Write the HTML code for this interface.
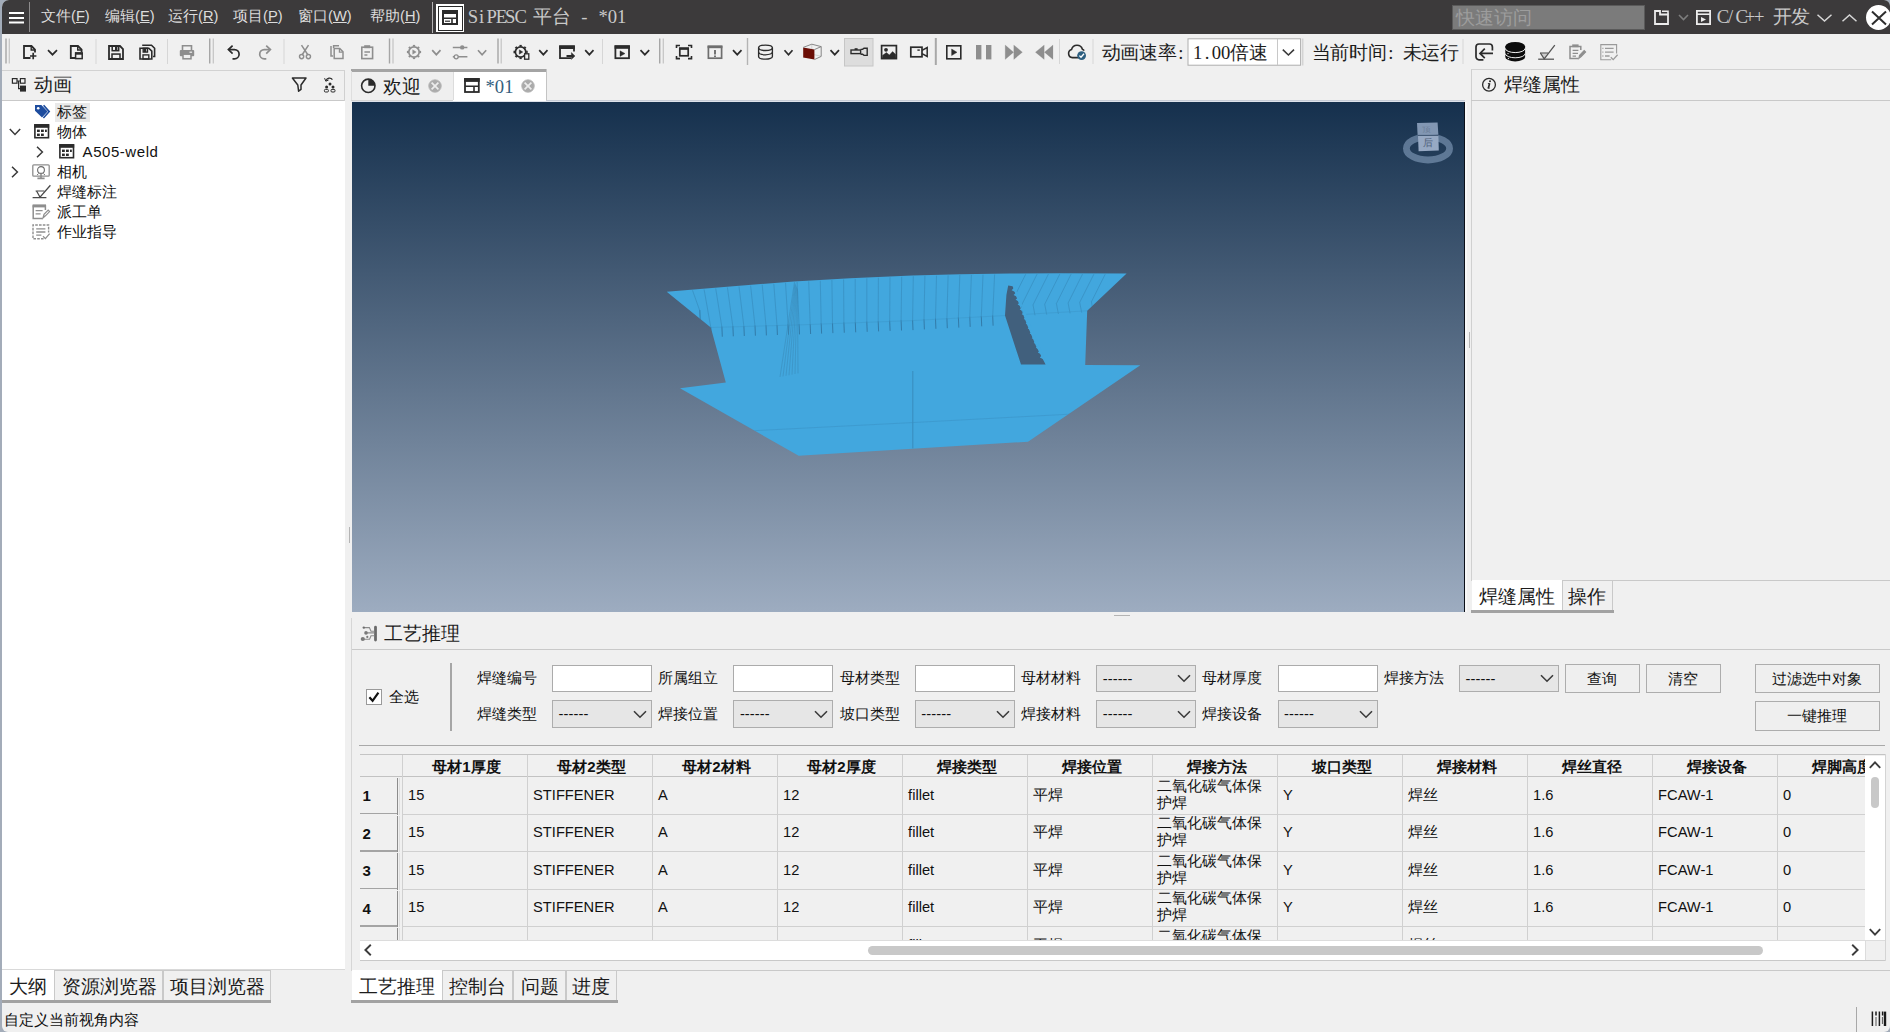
<!DOCTYPE html>
<html lang="zh">
<head>
<meta charset="utf-8">
<title>SiPESC 平台 - *01</title>
<style>
html,body{margin:0;padding:0;}
body{width:1890px;height:1032px;position:relative;overflow:hidden;background:#a3acb9;font-family:"Liberation Sans",sans-serif;color:#1a1a1a;}
.abs{position:absolute;}
#win{position:absolute;left:2px;top:0;width:1888px;height:1032px;background:#f0f0f0;border-radius:7px 6px 6px 6px;overflow:hidden;}
/* everything inside #wrap uses page coordinates */
#wrap{position:absolute;left:-2px;top:0;width:1890px;height:1032px;}
.t{position:absolute;white-space:nowrap;line-height:1;}
.song{font-family:"Liberation Serif",serif;font-weight:300;}
.sans{font-family:"Liberation Sans",sans-serif;}
svg{position:absolute;overflow:visible;}
/* title bar */
#titlebar{left:0;top:0;width:1890px;height:34.4px;background:#3c3a3b;}
.menu{font-size:14.67px;color:#dcdcdc;top:10px;}
/* toolbar */
#toolbar{left:0;top:34px;width:1890px;height:35px;background:#f0f0f0;}
.vsep{position:absolute;width:1px;background:#d4d4d4;top:39px;height:25px;}
.vsepd{position:absolute;width:2px;background:#a8a8a8;top:39px;height:25px;}
.hline{position:absolute;height:1px;background:#c9c9c9;}
.vline{position:absolute;width:1px;background:#c9c9c9;}
</style>
</head>
<body>
<div id="win"><div id="wrap">

<!-- ===== TITLE BAR ===== -->
<div id="titlebar" class="abs"></div>
<!--TITLE-S-->
<svg style="left:9px;top:11px" width="16" height="14" viewBox="0 0 16 14"><path d="M0 2H15M0 7H15M0 11.5H15" stroke="#fff" stroke-width="2.2" fill="none"/></svg>
<div class="abs" style="left:29px;top:2px;width:1px;height:30px;background:#8d8b8c"></div>
<span class="t menu" style="left:41px;top:0;height:34px;line-height:33px">文件(<u>F</u>)</span>
<span class="t menu" style="left:105px;top:0;height:34px;line-height:33px">编辑(<u>E</u>)</span>
<span class="t menu" style="left:168px;top:0;height:34px;line-height:33px">运行(<u>R</u>)</span>
<span class="t menu" style="left:233px;top:0;height:34px;line-height:33px">项目(<u>P</u>)</span>
<span class="t menu" style="left:298px;top:0;height:34px;line-height:33px">窗口(<u>W</u>)</span>
<span class="t menu" style="left:370px;top:0;height:34px;line-height:33px">帮助(<u>H</u>)</span>
<div class="abs" style="left:432px;top:2px;width:1px;height:31px;background:#b5b3b4"></div>
<div class="abs" style="left:436px;top:4px;width:28px;height:28px;background:#fff"></div>
<div class="abs" style="left:437.5px;top:5.5px;width:23px;height:23px;border:1px solid #2a2a2a"></div>
<svg style="left:442px;top:10px" width="16" height="15" viewBox="0 0 16 15"><rect x="1" y="1" width="14" height="13" fill="#fff" stroke="#2b2b2b" stroke-width="2"/><rect x="0" y="0" width="16" height="4" fill="#2b2b2b"/><path d="M1 8.2H15M10 8.2V14" stroke="#2b2b2b" stroke-width="1.6" fill="none"/><path d="M3 11.2H8" stroke="#2b2b2b" stroke-width="1.2"/></svg>
<span class="t song" style="left:467.7px;top:0px;width:9.34px;height:34px;line-height:34px;text-align:center;font-size:18.67px;color:#c9c9c9">S</span><span class="t song" style="left:477.0px;top:0px;width:9.34px;height:34px;line-height:34px;text-align:center;font-size:18.67px;color:#c9c9c9">i</span><span class="t song" style="left:486.4px;top:0px;width:9.34px;height:34px;line-height:34px;text-align:center;font-size:18.67px;color:#c9c9c9">P</span><span class="t song" style="left:495.7px;top:0px;width:9.34px;height:34px;line-height:34px;text-align:center;font-size:18.67px;color:#c9c9c9">E</span><span class="t song" style="left:505.0px;top:0px;width:9.34px;height:34px;line-height:34px;text-align:center;font-size:18.67px;color:#c9c9c9">S</span><span class="t song" style="left:514.4px;top:0px;width:9.34px;height:34px;line-height:34px;text-align:center;font-size:18.67px;color:#c9c9c9">C</span><span class="t song" style="left:533.0px;top:0px;width:18.67px;height:34px;line-height:34px;text-align:center;font-size:18.67px;color:#c9c9c9">平</span><span class="t song" style="left:551.7px;top:0px;width:18.67px;height:34px;line-height:34px;text-align:center;font-size:18.67px;color:#c9c9c9">台</span><span class="t song" style="left:579.7px;top:0px;width:9.34px;height:34px;line-height:34px;text-align:center;font-size:18.67px;color:#c9c9c9">-</span><span class="t song" style="left:598.4px;top:0px;width:9.34px;height:34px;line-height:34px;text-align:center;font-size:18.67px;color:#c9c9c9">*</span><span class="t song" style="left:607.7px;top:0px;width:9.34px;height:34px;line-height:34px;text-align:center;font-size:18.67px;color:#c9c9c9">0</span><span class="t song" style="left:617.1px;top:0px;width:9.34px;height:34px;line-height:34px;text-align:center;font-size:18.67px;color:#c9c9c9">1</span>
<div class="abs" style="left:1452px;top:5px;width:193px;height:25px;background:#7b7b7b;border:1px solid #5a5a5a;box-sizing:border-box"></div>
<span class="t song" style="left:1456px;top:5px;height:25px;line-height:26px;font-size:18.67px;color:#9d9d9d">快速访问</span>
<svg style="left:1654px;top:10px" width="15" height="15" viewBox="0 0 15 15"><path d="M1 1H6V4.5H14V14H1Z" fill="none" stroke="#ececec" stroke-width="1.8"/><path d="M8 1.2H14V4" fill="none" stroke="#ececec" stroke-width="1.6"/></svg>
<svg style="left:1678px;top:14px" width="11" height="7" viewBox="0 0 11 7"><path d="M1 1L5.5 5.5L10 1" fill="none" stroke="#7d7d7d" stroke-width="1.6"/></svg>
<svg style="left:1696px;top:10px" width="15" height="15" viewBox="0 0 15 15"><rect x="0.9" y="0.9" width="13.2" height="13.2" fill="none" stroke="#ececec" stroke-width="1.8"/><path d="M1 4.2H14" stroke="#ececec" stroke-width="1.6"/><path d="M5 7L10 9.5L5 12Z" fill="#ececec"/></svg>
<span class="t song" style="left:1716.7px;top:0px;width:9.34px;height:34px;line-height:34px;text-align:center;font-size:18.67px;color:#c9c9c9">C</span><span class="t song" style="left:1726.0px;top:0px;width:9.34px;height:34px;line-height:34px;text-align:center;font-size:18.67px;color:#c9c9c9">/</span><span class="t song" style="left:1735.4px;top:0px;width:9.34px;height:34px;line-height:34px;text-align:center;font-size:18.67px;color:#c9c9c9">C</span><span class="t song" style="left:1744.7px;top:0px;width:9.34px;height:34px;line-height:34px;text-align:center;font-size:18.67px;color:#c9c9c9">+</span><span class="t song" style="left:1754.0px;top:0px;width:9.34px;height:34px;line-height:34px;text-align:center;font-size:18.67px;color:#c9c9c9">+</span><span class="t song" style="left:1772.7px;top:0px;width:18.67px;height:34px;line-height:34px;text-align:center;font-size:18.67px;color:#c9c9c9">开</span><span class="t song" style="left:1791.4px;top:0px;width:18.67px;height:34px;line-height:34px;text-align:center;font-size:18.67px;color:#c9c9c9">发</span>
<svg style="left:1817px;top:14px" width="15" height="8" viewBox="0 0 15 8"><path d="M0.5 0.8L7.5 7L14.5 0.8" fill="none" stroke="#d6d6d6" stroke-width="1.5"/></svg>
<svg style="left:1842px;top:14px" width="15" height="8" viewBox="0 0 15 8"><path d="M0.5 7.2L7.5 1L14.5 7.2" fill="none" stroke="#d6d6d6" stroke-width="1.5"/></svg>
<div class="abs" style="left:1866.3px;top:5.4px;width:25px;height:25px;border-radius:50%;background:#fff"></div>
<svg style="left:1871px;top:11px" width="16" height="14" viewBox="0 0 16 14"><path d="M1 0.5L15 13.5M15 0.5L1 13.5" stroke="#2e2e2e" stroke-width="2" fill="none"/></svg>
<!--TITLE-E-->

<!-- ===== TOOLBAR ===== -->
<div id="toolbar" class="abs"></div>
<!--TOOLBAR-S-->
<svg style="left:0;top:34px" width="1890" height="36" viewBox="0 34 1890 36"><rect x="5.3" y="38.5" width="1.4" height="25.0" fill="#a6a6a6"/><rect x="8.700000000000001" y="38.5" width="1.2" height="25.0" fill="#c4c4c4"/><path d="M30.5 58H24V46H31.5L35 49.5V52.5" stroke="#2b2b2b" stroke-width="1.8" fill="none" /><path d="M31.2 46.3V50H35" stroke="#2b2b2b" stroke-width="1.4" fill="none" /><path d="M30 56H36.4M33.2 52.8V59.2" stroke="#2b2b2b" stroke-width="1.7" fill="none" /><path d="M48.0 50.199999999999996L52.5 54.699999999999996L57.0 50.199999999999996" stroke="#2b2b2b" stroke-width="1.7" fill="none" /><path d="M75 58H70.8V46H78L81.6 49.6V52" stroke="#2b2b2b" stroke-width="1.8" fill="none" /><path d="M77.7 46.3V50H81.5" stroke="#2b2b2b" stroke-width="1.4" fill="none" /><rect x="75.6" y="53" width="6.6" height="5.6" fill="#f0f0f0" stroke="#2b2b2b" stroke-width="1.5"/><rect x="75" y="52.3" width="7.8" height="2.4" fill="#2b2b2b"/><rect x="95.5" y="39" width="1" height="25" fill="#d6d6d6"/><path d="M109 46H120L123 49V59H109Z" stroke="#2b2b2b" stroke-width="1.8" fill="none" /><rect x="112.2" y="46" width="6.5" height="4.68" fill="none" stroke="#2b2b2b" stroke-width="1.53"/><rect x="115" y="46.8" width="2.4" height="3.6400000000000006" fill="#2b2b2b"/><rect x="112" y="54.06" width="8" height="4.94" fill="none" stroke="#2b2b2b" stroke-width="1.53"/><path d="M143 46V45.2H151.5L154.6 48.3V56.5H153" stroke="#2b2b2b" stroke-width="1.6" fill="none" /><path d="M140 48.2H148.8L151.8 51.2V59.0H140Z" stroke="#2b2b2b" stroke-width="1.6" fill="none" /><rect x="143.2" y="48.2" width="4.300000000000001" height="3.888" fill="none" stroke="#2b2b2b" stroke-width="1.36"/><rect x="143.8" y="49.0" width="2.4" height="3.0240000000000005" fill="#2b2b2b"/><rect x="143" y="54.896" width="5.800000000000001" height="4.104" fill="none" stroke="#2b2b2b" stroke-width="1.36"/><rect x="167.0" y="39" width="1" height="25" fill="#d6d6d6"/><path d="M182.5 50V45.8H191.5V50" stroke="#8e8e8e" stroke-width="1.6" fill="none" /><rect x="179.8" y="50" width="14.4" height="6.2" rx="1" fill="#8e8e8e"/><rect x="183" y="54.2" width="8" height="4.6" fill="#f0f0f0" stroke="#8e8e8e" stroke-width="1.5"/><rect x="189.5" y="51.6" width="2.6" height="1.2" fill="#f0f0f0"/><rect x="209.0" y="38.5" width="1.4" height="25.0" fill="#a6a6a6"/><rect x="212.70000000000002" y="38.5" width="1.2" height="25.0" fill="#c4c4c4"/><path d="M232.6 45.6L228.4 49.6L232.6 53.6" stroke="#2b2b2b" stroke-width="1.7" fill="none" /><path d="M228.8 49.6H234.5A4.6 4.6 0 0 1 234.5 58.8H232.5" stroke="#2b2b2b" stroke-width="1.7" fill="none" /><path d="M266.2 45.6L270.4 49.6L266.2 53.6" stroke="#8e8e8e" stroke-width="1.7" fill="none" /><path d="M270 49.6H264.3A4.6 4.6 0 0 0 264.3 58.8H266.3" stroke="#8e8e8e" stroke-width="1.7" fill="none" /><rect x="283.5" y="39" width="1" height="25" fill="#d6d6d6"/><path d="M301.5 45.2L308 55M308.5 45.2L302 55" stroke="#8e8e8e" stroke-width="1.5" fill="none" /><circle cx="301.6" cy="56.6" r="2.1" fill="none" stroke="#8e8e8e" stroke-width="1.4"/><circle cx="308.4" cy="56.6" r="2.1" fill="none" stroke="#8e8e8e" stroke-width="1.4"/><path d="M333.6 48V45.8H339" stroke="#8e8e8e" stroke-width="1.5" fill="none" /><path d="M331 46V56H333" stroke="#8e8e8e" stroke-width="1.5" fill="none" /><path d="M334.2 48.6H339.8L343 51.8V58.6H334.2Z" stroke="#8e8e8e" stroke-width="1.5" fill="none" /><path d="M339.4 48.8V52.2H342.8" stroke="#8e8e8e" stroke-width="1.2" fill="none" /><rect x="361.8" y="47.2" width="10.8" height="11.4" fill="none" stroke="#8e8e8e" stroke-width="1.6"/><rect x="364.2" y="45.2" width="6" height="3" fill="#8e8e8e"/><path d="M364.4 52H370M364.4 55H367.4" stroke="#8e8e8e" stroke-width="1.3" fill="none" /><rect x="388.8" y="38.5" width="1.4" height="25.0" fill="#a6a6a6"/><rect x="392.4" y="38.5" width="1.2" height="25.0" fill="#c4c4c4"/><circle cx="414" cy="52" r="5.2" fill="none" stroke="#8e8e8e" stroke-width="1.7"/><path d="M419.60 52.00L421.10 52.00" stroke="#8e8e8e" stroke-width="2.3" fill="none" /><path d="M417.96 55.96L419.02 57.02" stroke="#8e8e8e" stroke-width="2.3" fill="none" /><path d="M414.00 57.60L414.00 59.10" stroke="#8e8e8e" stroke-width="2.3" fill="none" /><path d="M410.04 55.96L408.98 57.02" stroke="#8e8e8e" stroke-width="2.3" fill="none" /><path d="M408.40 52.00L406.90 52.00" stroke="#8e8e8e" stroke-width="2.3" fill="none" /><path d="M410.04 48.04L408.98 46.98" stroke="#8e8e8e" stroke-width="2.3" fill="none" /><path d="M414.00 46.40L414.00 44.90" stroke="#8e8e8e" stroke-width="2.3" fill="none" /><path d="M417.96 48.04L419.02 46.98" stroke="#8e8e8e" stroke-width="2.3" fill="none" /><path d="M412.7 49.8L416.2 52L412.7 54.2Z" stroke="#8e8e8e" stroke-width="0.4" fill="#8e8e8e" /><path d="M432.2 50.199999999999996L436.35 54.699999999999996L440.5 50.199999999999996" stroke="#8e8e8e" stroke-width="1.7" fill="none" /><path d="M452.8 47.4H467.4M452.8 56.8H467.4" stroke="#8e8e8e" stroke-width="1.5" fill="none" /><circle cx="462.2" cy="47.4" r="2.2" fill="#8e8e8e"/><circle cx="456.2" cy="56.8" r="2" fill="#f0f0f0" stroke="#8e8e8e" stroke-width="1.3"/><path d="M478.0 50.199999999999996L482.1 54.699999999999996L486.2 50.199999999999996" stroke="#8e8e8e" stroke-width="1.7" fill="none" /><rect x="497.3" y="38.5" width="1.4" height="25.0" fill="#a6a6a6"/><rect x="500.59999999999997" y="38.5" width="1.2" height="25.0" fill="#c4c4c4"/><circle cx="520.6" cy="52" r="5.2" fill="none" stroke="#2b2b2b" stroke-width="1.7"/><path d="M526.20 52.00L527.70 52.00" stroke="#2b2b2b" stroke-width="2.3" fill="none" /><path d="M524.56 55.96L525.62 57.02" stroke="#2b2b2b" stroke-width="2.3" fill="none" /><path d="M520.60 57.60L520.60 59.10" stroke="#2b2b2b" stroke-width="2.3" fill="none" /><path d="M516.64 55.96L515.58 57.02" stroke="#2b2b2b" stroke-width="2.3" fill="none" /><path d="M515.00 52.00L513.50 52.00" stroke="#2b2b2b" stroke-width="2.3" fill="none" /><path d="M516.64 48.04L515.58 46.98" stroke="#2b2b2b" stroke-width="2.3" fill="none" /><path d="M520.60 46.40L520.60 44.90" stroke="#2b2b2b" stroke-width="2.3" fill="none" /><path d="M524.56 48.04L525.62 46.98" stroke="#2b2b2b" stroke-width="2.3" fill="none" /><path d="M519.3000000000001 49.8L522.8000000000001 52L519.3000000000001 54.2Z" stroke="#2b2b2b" stroke-width="0.4" fill="#2b2b2b" /><rect x="524.6" y="53.8" width="4.2" height="5.4" fill="#f0f0f0" stroke="#2b2b2b" stroke-width="1.3"/><path d="M539.2 50.199999999999996L543.35 54.699999999999996L547.5 50.199999999999996" stroke="#2b2b2b" stroke-width="1.7" fill="none" /><path d="M571 58.2H560V46.4H574V51.6" stroke="#2b2b2b" stroke-width="1.8" fill="none" /><rect x="559.2" y="45.4" width="15.6" height="3.6" fill="#2b2b2b"/><path d="M566.5 56H573.2" stroke="#2b2b2b" stroke-width="2" fill="none" /><path d="M571.4 52.6L575 56L571.4 59.4Z" stroke="#2b2b2b" stroke-width="0.4" fill="#2b2b2b" /><path d="M585.2 50.199999999999996L589.35 54.699999999999996L593.5 50.199999999999996" stroke="#2b2b2b" stroke-width="1.7" fill="none" /><rect x="602.0" y="39" width="1" height="25" fill="#d6d6d6"/><rect x="615.4" y="46.2" width="13.6" height="12" fill="none" stroke="#2b2b2b" stroke-width="1.8"/><rect x="614.6" y="45.4" width="15.2" height="3.4" fill="#2b2b2b"/><path d="M620 50.8L625 53.6L620 56.4Z" stroke="#2b2b2b" stroke-width="0.4" fill="#2b2b2b" /><path d="M640.5 50.199999999999996L644.85 54.699999999999996L649.2 50.199999999999996" stroke="#2b2b2b" stroke-width="1.7" fill="none" /><rect x="659.0" y="38.5" width="1.4" height="25.0" fill="#a6a6a6"/><rect x="662.6999999999999" y="38.5" width="1.2" height="25.0" fill="#c4c4c4"/><rect x="679.8" y="48.4" width="8.4" height="7.4" fill="none" stroke="#2b2b2b" stroke-width="1.7"/><rect x="679" y="47.4" width="10" height="2.4" fill="#2b2b2b"/><path d="M676.5 48V45.5H680M688 45.5H691.5V48M691.5 56V58.6H688M680 58.6H676.5V56" stroke="#2b2b2b" stroke-width="1.6" fill="none" /><rect x="708.4" y="46.4" width="13.2" height="11.8" fill="none" stroke="#6e6e6e" stroke-width="1.7"/><rect x="707.6" y="45.6" width="14.8" height="2.6" fill="#6e6e6e"/><path d="M715 50V54.4M715 55.6V57" stroke="#6e6e6e" stroke-width="1.9" fill="none" /><path d="M733.0 50.199999999999996L737.25 54.699999999999996L741.5 50.199999999999996" stroke="#2b2b2b" stroke-width="1.7" fill="none" /><rect x="746.8" y="38" width="1.4" height="27" fill="#b4b4b4"/><ellipse cx="765.5" cy="47.8" rx="6.9" ry="2.7" fill="none" stroke="#2b2b2b" stroke-width="1.35"/><path d="M758.6 47.8V56.4A6.9 2.7 0 0 0 772.4 56.4V47.8" stroke="#2b2b2b" stroke-width="1.35" fill="none" /><path d="M758.6 52.1A6.9 2.7 0 0 0 772.4 52.1" stroke="#2b2b2b" stroke-width="1.2" fill="none" /><path d="M784.5 50.199999999999996L788.5 54.699999999999996L792.5 50.199999999999996" stroke="#2b2b2b" stroke-width="1.7" fill="none" /><path d="M811.8 44.4V54.2L803.4 57.6M811.8 54.2L821 56.2" stroke="#c4c4c4" stroke-width="0.7" fill="none" /><path d="M803.2 47.4L814.4 49.6V59.6L803.2 57.6Z" fill="#6b0e06"/><path d="M803.2 47.4L811.8 44.2L821.2 46.6L814.4 49.6" stroke="#7c7c7c" stroke-width="0.9" fill="none" /><path d="M821.2 46.6V56.4L814.4 59.6" stroke="#7c7c7c" stroke-width="0.9" fill="none" /><path d="M830.5 50.199999999999996L834.75 54.699999999999996L839.0 50.199999999999996" stroke="#2b2b2b" stroke-width="1.7" fill="none" /><rect x="844.5" y="38.5" width="28.5" height="27.5" fill="#dddddd" stroke="#c6c6c6" stroke-width="1"/><rect x="851" y="50" width="9.6" height="3.6" fill="none" stroke="#2b2b2b" stroke-width="1.4"/><path d="M860.6 49.4H862.6L864 48.2H867.2V55.4H864L862.6 54.2H860.6" stroke="#2b2b2b" stroke-width="1.4" fill="none" /><rect x="854.6" y="48.2" width="3" height="1.8" fill="#2b2b2b"/><rect x="881.6" y="45.6" width="14.8" height="13" fill="none" stroke="#2b2b2b" stroke-width="1.7"/><circle cx="886" cy="49.8" r="1.9" fill="#2b2b2b"/><path d="M882.4 58V55.4L886.4 52.6L889.4 55L892.6 51.6L895.8 54.6V58Z" stroke="#2b2b2b" stroke-width="0.4" fill="#2b2b2b" /><rect x="910.8" y="47.2" width="11.2" height="9.6" fill="none" stroke="#2b2b2b" stroke-width="1.7"/><path d="M922 50.4L927.2 47.6V56.4L922 53.6" stroke="#2b2b2b" stroke-width="1.5" fill="none" /><rect x="917.4" y="49.4" width="2.4" height="1.4" fill="#2b2b2b"/><rect x="934.8" y="38" width="2" height="27" fill="#a8a8a8"/><rect x="946.8" y="45.8" width="14" height="13" fill="none" stroke="#2b2b2b" stroke-width="1.6"/><path d="M951.6 49L957 52.3L951.6 55.6Z" stroke="#2b2b2b" stroke-width="0.4" fill="#2b2b2b" /><rect x="976" y="45" width="5.4" height="14.4" fill="#8e8e8e"/><rect x="986" y="45" width="5.4" height="14.4" fill="#8e8e8e"/><path d="M1005.2 45L1013.6 52.2L1005.2 59.4ZM1013.8 45L1022.4 52.2L1013.8 59.4Z" stroke="#8e8e8e" stroke-width="0.2" fill="#8e8e8e" /><path d="M1053 45L1044.4 52.2L1053 59.4ZM1044.2 45L1035.4 52.2L1044.2 59.4Z" stroke="#8e8e8e" stroke-width="0.2" fill="#8e8e8e" /><rect x="1059.0" y="39" width="1" height="25" fill="#d6d6d6"/><path d="M1078.6 57.6H1072.4A4.2 4.2 0 0 1 1071.6 49.4A5.6 5.6 0 0 1 1082.4 49.2A3.6 3.6 0 0 1 1084.2 50.6" stroke="#2b2b2b" stroke-width="1.6" fill="none" /><circle cx="1081.6" cy="55.6" r="4.4" fill="#2d5f80"/><path d="M1079.4 55.6L1081 57.2L1084 53.8" stroke="#fff" stroke-width="1.3" fill="none" /><rect x="1092.5" y="39" width="1" height="25" fill="#d6d6d6"/><rect x="1188" y="38.8" width="112.6" height="26.4" fill="#fff" stroke="#adadad" stroke-width="1"/><rect x="1277" y="39" width="1" height="26" fill="#c8c8c8"/><path d="M1282.8 49.6L1288.4 55L1294 49.6" stroke="#3a3a3a" stroke-width="1.6" fill="none" /><rect x="1302.3" y="38.5" width="1" height="27.0" fill="#c8c8c8"/><rect x="1462.5" y="39" width="1" height="25" fill="#d6d6d6"/><path d="M1483.4 59.8H1479A3 3 0 0 1 1476 56.8V47A3 3 0 0 1 1479 44H1489.4A3 3 0 0 1 1492.4 47V50.6" stroke="#2b2b2b" stroke-width="1.7" fill="none" /><path d="M1493 53.4H1480.6M1484.8 48.6L1480 53.4L1484.8 58.2" stroke="#2b2b2b" stroke-width="1.7" fill="none" /><ellipse cx="1515.2" cy="46.4" rx="9.9" ry="4.5" fill="#0c0c0c"/><path d="M1505.3 46.4V57A9.9 4.4 0 0 0 1525.1 57V46.4Z" fill="#0c0c0c"/><path d="M1505.3 48.4A9.9 4.2 0 0 0 1525.1 48.4M1505.3 53.6A9.9 4.2 0 0 0 1525.1 53.6" stroke="#f0f0f0" stroke-width="1.0" fill="none" /><circle cx="1508" cy="53.6" r="0.7" fill="#f0f0f0"/><circle cx="1508.4" cy="58.6" r="0.7" fill="#f0f0f0"/><path d="M1540.6 53.2H1547.6L1544.2 58.6Z" fill="#cfcfcf"/><path d="M1538.2 59.2H1554" stroke="#555" stroke-width="1.3" fill="none" /><path d="M1540.4 53L1544.2 58.8L1554.8 45.2" stroke="#555" stroke-width="1.3" fill="none" /><path d="M1540 53H1548" stroke="#555" stroke-width="1.1" fill="none" /><path d="M1578.4 58.6H1570V46.4H1580.8V50" stroke="#8e8e8e" stroke-width="1.5" fill="none" /><rect x="1572.2" y="44.4" width="6.4" height="2.8" fill="#8e8e8e"/><path d="M1572.6 50.4H1578.4M1572.6 53.4H1578M1572.6 56.2H1576" stroke="#8e8e8e" stroke-width="1.2" fill="none" /><path d="M1578.8 58.4L1579.6 55.2L1584.2 50.6L1585.6 52L1581.2 56.6Z" stroke="#8e8e8e" stroke-width="1.1" fill="#8e8e8e" /><path d="M1611.2 59.8H1600.8V44.6H1616.6V53.6" stroke="#9a9a9a" stroke-width="1.1" fill="none" /><path d="M1605 48.4H1613.6M1605 52.2H1613.6M1605 56H1609.6" stroke="#9a9a9a" stroke-width="1.3" fill="none" /><path d="M1602.4 48.4H1603.4M1602.4 52.2H1603.4M1602.4 56H1603.4" stroke="#9a9a9a" stroke-width="1.3" fill="none" /><path d="M1610.8 57.2L1613.2 59.6L1617.6 54.8" stroke="#9a9a9a" stroke-width="1.3" fill="none" /></svg>
<span class="t song" style="left:1101.5px;top:38.8px;width:18.67px;height:28px;line-height:28px;text-align:center;font-size:18.67px;color:#1c1c1c">动</span><span class="t song" style="left:1120.2px;top:38.8px;width:18.67px;height:28px;line-height:28px;text-align:center;font-size:18.67px;color:#1c1c1c">画</span><span class="t song" style="left:1138.8px;top:38.8px;width:18.67px;height:28px;line-height:28px;text-align:center;font-size:18.67px;color:#1c1c1c">速</span><span class="t song" style="left:1157.5px;top:38.8px;width:18.67px;height:28px;line-height:28px;text-align:center;font-size:18.67px;color:#1c1c1c">率</span><span class="t song" style="left:1176.2px;top:38.8px;width:9.34px;height:28px;line-height:28px;text-align:center;font-size:18.67px;color:#1c1c1c">:</span>
<span class="t song" style="left:1193.0px;top:38.8px;width:9.34px;height:28px;line-height:28px;text-align:center;font-size:18.67px;color:#1c1c1c">1</span><span class="t song" style="left:1202.3px;top:38.8px;width:9.34px;height:28px;line-height:28px;text-align:center;font-size:18.67px;color:#1c1c1c">.</span><span class="t song" style="left:1211.7px;top:38.8px;width:9.34px;height:28px;line-height:28px;text-align:center;font-size:18.67px;color:#1c1c1c">0</span><span class="t song" style="left:1221.0px;top:38.8px;width:9.34px;height:28px;line-height:28px;text-align:center;font-size:18.67px;color:#1c1c1c">0</span><span class="t song" style="left:1230.3px;top:38.8px;width:18.67px;height:28px;line-height:28px;text-align:center;font-size:18.67px;color:#1c1c1c">倍</span><span class="t song" style="left:1249.0px;top:38.8px;width:18.67px;height:28px;line-height:28px;text-align:center;font-size:18.67px;color:#1c1c1c">速</span>
<span class="t song" style="left:1311.5px;top:38.8px;width:18.67px;height:28px;line-height:28px;text-align:center;font-size:18.67px;color:#1c1c1c">当</span><span class="t song" style="left:1330.2px;top:38.8px;width:18.67px;height:28px;line-height:28px;text-align:center;font-size:18.67px;color:#1c1c1c">前</span><span class="t song" style="left:1348.8px;top:38.8px;width:18.67px;height:28px;line-height:28px;text-align:center;font-size:18.67px;color:#1c1c1c">时</span><span class="t song" style="left:1367.5px;top:38.8px;width:18.67px;height:28px;line-height:28px;text-align:center;font-size:18.67px;color:#1c1c1c">间</span><span class="t song" style="left:1386.2px;top:38.8px;width:9.34px;height:28px;line-height:28px;text-align:center;font-size:18.67px;color:#1c1c1c">:</span>
<span class="t song" style="left:1402.5px;top:38.8px;width:18.67px;height:28px;line-height:28px;text-align:center;font-size:18.67px;color:#1c1c1c">未</span><span class="t song" style="left:1421.2px;top:38.8px;width:18.67px;height:28px;line-height:28px;text-align:center;font-size:18.67px;color:#1c1c1c">运</span><span class="t song" style="left:1439.8px;top:38.8px;width:18.67px;height:28px;line-height:28px;text-align:center;font-size:18.67px;color:#1c1c1c">行</span>
<!--TOOLBAR-E-->

<!-- ===== LEFT PANEL ===== -->
<div class="abs" style="left:2px;top:101px;width:343px;height:868px;background:#fff"></div>
<div class="hline" style="left:2px;top:100px;width:343px;"></div>
<div class="vline" style="left:344px;top:70px;height:31px;background:#d0d0d0"></div>
<!--LEFT-S-->
<div class="hline" style="left:2px;top:70px;width:343px;background:#d2d2d2"></div>
<svg style="left:11px;top:77px" width="16" height="16" viewBox="11 77 16 16"><rect x="12.4" y="78.6" width="4.6" height="4.6" fill="none" stroke="#2b2b2b" stroke-width="1.2"/><rect x="20.4" y="78.6" width="4.6" height="4.6" fill="none" stroke="#2b2b2b" stroke-width="1.2"/><path d="M17 81H20.4M18.6 81V88.6H20" stroke="#2b2b2b" stroke-width="1.2" fill="none"/><rect x="20" y="85.6" width="6" height="6" fill="#2b2b2b"/></svg>
<span class="t song" style="left:33.5px;top:70px;height:30px;line-height:30px;font-size:18.67px;color:#1c1c1c">动画</span>
<svg style="left:290px;top:76px" width="18" height="17" viewBox="290 76 18 17"><path d="M292.4 78H306L301 85V89.4L298.6 91.2L297.8 85Z" fill="none" stroke="#2b2b2b" stroke-width="1.5" stroke-linejoin="round"/></svg>
<svg style="left:322px;top:76px" width="15" height="17" viewBox="322 76 15 17"><path d="M326 80.6A3.6 3.6 0 0 1 332.4 79.6" fill="none" stroke="#2b2b2b" stroke-width="1.2"/><path d="M324.6 78.2L325.8 81.2L328.6 80" fill="none" stroke="#2b2b2b" stroke-width="1"/><circle cx="330" cy="84" r="1.5" fill="#2b2b2b"/><circle cx="326.6" cy="87" r="1.5" fill="#2b2b2b"/><circle cx="333" cy="87" r="1.5" fill="#2b2b2b"/><rect x="324.4" y="89.4" width="4" height="2.6" rx="1" fill="none" stroke="#2b2b2b" stroke-width="1"/><rect x="331" y="89.4" width="4" height="2.6" rx="1" fill="none" stroke="#2b2b2b" stroke-width="1"/></svg>
<div class="abs" style="left:55px;top:102.5px;width:34.5px;height:19px;background:#e9e9e9"></div>
<svg style="left:33.5px;top:104px" width="16" height="16" viewBox="0 0 16 16"><path d="M1 1H7.4L13.6 7.6L8 13.4L1 6.8Z" fill="#1d4c9e"/><circle cx="4.2" cy="4.2" r="1.3" fill="#fff"/><path d="M9.6 1.2L15.2 7.6L9.4 14" fill="none" stroke="#1d4c9e" stroke-width="1.6"/></svg>
<span class="t sans" style="left:57px;top:101.8px;height:20px;line-height:20px;font-size:15px;color:#111;">标签</span>
<svg style="left:9px;top:127.5px" width="12" height="8" viewBox="0 0 12 8"><path d="M0.8 1L6 6.4L11.2 1" fill="none" stroke="#3a3a3a" stroke-width="1.5"/></svg>
<svg style="left:34px;top:124.39999999999999px" width="16" height="15" viewBox="0 0 16 15"><rect x="0.9" y="0.9" width="13.6" height="12.8" fill="#fff" stroke="#2b2b2b" stroke-width="1.6"/><rect x="0.2" y="0.2" width="15" height="3.6" fill="#2b2b2b"/><rect x="3" y="5.6" width="2.8" height="2.4" fill="#2b2b2b"/><rect x="7" y="5.6" width="2.8" height="2.4" fill="#2b2b2b"/><rect x="11" y="5.6" width="1.8" height="2.4" fill="#2b2b2b"/><rect x="3" y="9.6" width="2.8" height="2.4" fill="#2b2b2b"/><rect x="7" y="9.6" width="2.8" height="2.4" fill="#2b2b2b"/></svg>
<span class="t sans" style="left:57px;top:121.80000000000001px;height:20px;line-height:20px;font-size:15px;color:#111;">物体</span>
<svg style="left:36px;top:145.5px" width="8" height="12" viewBox="0 0 8 12"><path d="M1 0.8L6.4 6L1 11.2" fill="none" stroke="#3a3a3a" stroke-width="1.5"/></svg>
<svg style="left:58.8px;top:144.4px" width="16" height="15" viewBox="0 0 16 15"><rect x="0.9" y="0.9" width="13.6" height="12.8" fill="#fff" stroke="#2b2b2b" stroke-width="1.6"/><rect x="0.2" y="0.2" width="15" height="3.6" fill="#2b2b2b"/><rect x="3" y="5.6" width="2.8" height="2.4" fill="#2b2b2b"/><rect x="7" y="5.6" width="2.8" height="2.4" fill="#2b2b2b"/><rect x="11" y="5.6" width="1.8" height="2.4" fill="#2b2b2b"/><rect x="3" y="9.6" width="2.8" height="2.4" fill="#2b2b2b"/><rect x="7" y="9.6" width="2.8" height="2.4" fill="#2b2b2b"/></svg>
<span class="t sans" style="left:82.6px;top:141.8px;height:20px;line-height:20px;font-size:15px;color:#111;letter-spacing:0.55px">A505-weld</span>
<svg style="left:11px;top:165.5px" width="8" height="12" viewBox="0 0 8 12"><path d="M1 0.8L6.4 6L1 11.2" fill="none" stroke="#3a3a3a" stroke-width="1.5"/></svg>
<svg style="left:32px;top:164px" width="18" height="16" viewBox="0 0 18 16"><rect x="0.8" y="0.8" width="16.4" height="11.4" rx="1" fill="none" stroke="#8e8e8e" stroke-width="1.3"/><circle cx="9" cy="6" r="3.4" fill="none" stroke="#6a6a6a" stroke-width="1.1"/><path d="M9 9.4V13.4M5.4 14.4H12.6" stroke="#8e8e8e" stroke-width="1.6" fill="none"/><path d="M6.6 9.6L5 11M11.4 9.6L13 11" stroke="#6a6a6a" stroke-width="0.9"/></svg>
<span class="t sans" style="left:57px;top:161.8px;height:20px;line-height:20px;font-size:15px;color:#111;">相机</span>
<svg style="left:32px;top:184px" width="19" height="15" viewBox="0 0 19 15"><path d="M0.6 13.6H14.4" stroke="#4a4a4a" stroke-width="1.4"/><path d="M4.6 7L8 13.2L18.4 1.2" fill="none" stroke="#4a4a4a" stroke-width="1.3"/><path d="M3.6 7H12.4" stroke="#4a4a4a" stroke-width="1.2"/></svg>
<span class="t sans" style="left:57px;top:181.8px;height:20px;line-height:20px;font-size:15px;color:#111;">焊缝标注</span>
<svg style="left:32px;top:204px" width="18" height="16" viewBox="0 0 18 16"><path d="M10.6 14.6H1.2V2H13.4V6" fill="none" stroke="#8e8e8e" stroke-width="1.5"/><rect x="0.6" y="0.4" width="13.4" height="3" fill="#8e8e8e"/><path d="M3.6 6.6H10.6M3.6 9.8H8.6" stroke="#8e8e8e" stroke-width="1.3"/><path d="M11 14L12 10.4L16.2 6.2L17.6 7.6L13.4 11.8Z" fill="none" stroke="#8e8e8e" stroke-width="1.2"/></svg>
<span class="t sans" style="left:57px;top:201.8px;height:20px;line-height:20px;font-size:15px;color:#111;">派工单</span>
<svg style="left:32px;top:224px" width="18" height="16" viewBox="0 0 18 16"><path d="M11.6 14.8H1V1H16.6V8.6" fill="none" stroke="#8e8e8e" stroke-width="1.4" stroke-dasharray="2.6 1.2"/><path d="M4.2 4.8H13.4M4.2 8H13.4M4.2 11.2H9.4" stroke="#8e8e8e" stroke-width="1.3"/><path d="M11 12.2L13.4 14.6L17.6 9.6" fill="none" stroke="#8e8e8e" stroke-width="1.3"/></svg>
<span class="t sans" style="left:57px;top:221.8px;height:20px;line-height:20px;font-size:15px;color:#111;">作业指导</span>
<div class="hline" style="left:2px;top:969px;width:343px;background:#d9d9d9"></div>
<div class="abs" style="left:2px;top:970px;width:52px;height:30px;background:#fff"></div>
<span class="t song" style="left:8.6px;top:971px;height:30px;line-height:32px;font-size:18.67px;color:#1c1c1c">大纲</span>
<div class="abs" style="left:54px;top:970px;width:108.5px;height:30px;background:#f0f0f0;border:1px solid #c9c9c9;border-bottom:none;box-sizing:border-box"></div>
<span class="t song" style="left:61.5px;top:971px;height:30px;line-height:32px;font-size:18.67px;color:#1c1c1c">资源浏览器</span>
<div class="abs" style="left:162.5px;top:970px;width:108.0px;height:30px;background:#f0f0f0;border:1px solid #c9c9c9;border-bottom:none;box-sizing:border-box"></div>
<span class="t song" style="left:170.3px;top:971px;height:30px;line-height:32px;font-size:18.67px;color:#1c1c1c">项目浏览器</span>
<div class="abs" style="left:2px;top:1000px;width:269px;height:3px;background:#a2a2a2"></div>
<!--LEFT-E-->

<!-- ===== EDITOR TABS + VIEWPORT ===== -->
<div class="abs" style="left:352px;top:102px;width:1112px;height:510px;background:linear-gradient(to bottom,#15304d 0%,#9dacc0 100%)"></div>
<div class="abs" style="left:1464px;top:102px;width:1px;height:510px;background:#0a0f18"></div>
<!--VIEW-S-->
<div class="abs" style="left:351px;top:69px;width:195.4px;height:2.6px;background:#a4a4a4"></div>
<div class="abs" style="left:351px;top:71.6px;width:102px;height:28.4px;background:#efefef"></div>
<div class="abs" style="left:453px;top:71.6px;width:92.8px;height:29.4px;background:#fff"></div>
<div class="vline" style="left:351px;top:71px;height:30px;background:#dedede"></div>
<div class="vline" style="left:452.5px;top:72px;height:28px;background:#dcdcdc"></div>
<div class="vline" style="left:545.8px;top:69px;height:31px;background:#c4c4c4"></div>
<div class="hline" style="left:546px;top:100px;width:919px;background:#c6ccd6"></div>
<div class="hline" style="left:351px;top:100px;width:102px;background:#d4d4d4"></div>
<div class="hline" style="left:352px;top:101px;width:1113px;background:#dde2ea"></div>
<svg style="left:360px;top:78px" width="17" height="17" viewBox="360 78 17 17"><circle cx="368.3" cy="85.8" r="6.7" fill="none" stroke="#2b2b2b" stroke-width="1.6"/><path d="M368.3 85.8V79.2A6.7 6.7 0 0 1 375 85.8Z" fill="#2b2b2b"/></svg>
<span class="t song" style="left:383px;top:71.8px;height:30px;line-height:30px;font-size:18.67px;color:#1c1c1c">欢迎</span>
<svg style="left:428px;top:78.8px" width="14" height="14" viewBox="-7 -7 14 14"><circle cx="0" cy="0" r="6.3" fill="#ababab"/><path d="M-3.4 -3.4L3.4 3.4M3.4 -3.4L-3.4 3.4" stroke="#ececec" stroke-width="1.7"/><circle cx="0" cy="0" r="6.3" fill="none" stroke="#b8b8b8" stroke-width="0.8"/></svg>
<svg style="left:463.5px;top:78px" width="16" height="15" viewBox="0 0 16 15"><rect x="1" y="1" width="13.8" height="13" fill="#fff" stroke="#2b2b2b" stroke-width="1.8"/><rect x="0.1" y="0.1" width="15.6" height="3.8" fill="#2b2b2b"/><path d="M1 8.2H15M10 8.2V14" stroke="#2b2b2b" stroke-width="1.6" fill="none"/></svg>
<span class="t song" style="left:485.5px;top:71.8px;width:9.34px;height:30px;line-height:30px;text-align:center;font-size:18.67px;color:#35607e">*</span><span class="t song" style="left:494.8px;top:71.8px;width:9.34px;height:30px;line-height:30px;text-align:center;font-size:18.67px;color:#35607e">0</span><span class="t song" style="left:504.2px;top:71.8px;width:9.34px;height:30px;line-height:30px;text-align:center;font-size:18.67px;color:#35607e">1</span>
<svg style="left:521.4px;top:78.8px" width="14" height="14" viewBox="-7 -7 14 14"><circle cx="0" cy="0" r="6.3" fill="#ababab"/><path d="M-3.4 -3.4L3.4 3.4M3.4 -3.4L-3.4 3.4" stroke="#ececec" stroke-width="1.7"/><circle cx="0" cy="0" r="6.3" fill="none" stroke="#b8b8b8" stroke-width="0.8"/></svg>
<svg style="left:352px;top:102px" width="1112" height="510" viewBox="352 102 1112 510"><defs><clipPath id="mclip"><polygon points="666.7,291.7 730,286.4 793.7,281.4 850,278.2 912,275.4 960,274.2 1009.6,273.4 1060,273.3 1126.6,273.4 1087.2,310.8 1085.2,365 1140.3,365.3 1028,441.7 798.7,455.8 680,388.3 725.8,382.5 710.8,327.5"/></clipPath></defs><polygon points="666.7,291.7 730,286.4 793.7,281.4 850,278.2 912,275.4 960,274.2 1009.6,273.4 1060,273.3 1126.6,273.4 1087.2,310.8 1085.2,365 1140.3,365.3 1028,441.7 798.7,455.8 680,388.3 725.8,382.5 710.8,327.5" fill="#42a7de"/><g clip-path="url(#mclip)"><path d="M692.5 290.3L699.8 310.8M704.1 289.4L710.8 327.5M715.7 288.4L721.9 327.2M727.4 287.4L732.9 326.8M739.0 286.5L743.9 326.5M750.6 285.6L755.0 326.2M762.2 284.7L766.0 325.9M773.8 283.8L777.0 325.5M785.5 282.8L788.1 325.2M797.1 282.0L799.1 324.9M808.7 281.3L810.2 324.5M820.3 280.7L821.2 324.1M831.9 280.0L832.5 323.6M843.6 279.4L843.9 323.2M855.2 278.8L855.3 322.8M866.8 278.2L866.8 322.3M878.4 277.7L878.2 321.9M890.0 277.2L889.7 321.4M901.7 276.7L901.1 321.0M913.3 276.2L912.6 320.6M924.9 275.9L924.0 319.9M936.5 275.6L935.5 319.3M948.1 275.3L946.9 318.7M959.8 275.0L958.4 318.1M971.4 274.8L969.8 317.4M983.0 274.6L981.3 316.8M994.6 274.4L992.7 316.2M1025.7 274.2L1009.7 306.1L1011.7 316.6M1037.1 274.1L1021.4 305.5L1023.4 316.0M1048.4 274.1L1033.0 304.9L1035.0 315.3M1059.8 274.1L1044.7 304.2L1046.7 314.6M1071.1 274.1L1056.4 303.6L1058.4 314.0M1082.5 274.1L1068.1 303.0L1070.1 313.3M1093.9 274.2L1079.7 302.4L1081.7 312.6M1105.2 274.2L1091.4 301.8L1093.4 312.3" stroke="#3484b5" stroke-width="0.7" fill="none" opacity="0.75"/><path d="M699.8 310.3L700.2 320.3M710.8 327.0L711.2 337.0M721.9 326.7L722.3 336.7M732.9 326.3L733.3 336.3M743.9 326.0L744.3 336.0M755.0 325.7L755.4 335.7M766.0 325.4L766.4 335.4M777.0 325.0L777.4 335.0M788.1 324.7L788.5 334.7M799.1 324.4L799.5 334.4M810.2 324.0L810.6 334.0M821.2 323.6L821.6 333.6M832.5 323.1L832.9 333.1M843.9 322.7L844.3 332.7M855.3 322.3L855.7 332.3M866.8 321.8L867.2 331.8M878.2 321.4L878.6 331.4M889.7 320.9L890.1 330.9M901.1 320.5L901.5 330.5M912.6 320.1L913.0 330.1M924.0 319.4L924.4 329.4M935.5 318.8L935.9 328.8M946.9 318.2L947.3 328.2M958.4 317.6L958.8 327.6M969.8 316.9L970.2 326.9M981.3 316.3L981.7 326.3M992.7 315.7L993.1 325.7" stroke="#2e6d99" stroke-width="0.9" fill="none" opacity="0.85"/><path d="M710.8 327.5L801.7 324.8L912 320.6L1000 315.8L1087.2 310.8" stroke="#3b94c8" stroke-width="0.7" fill="none" opacity="0.7"/><path d="M794.5 282.0L780.0 377.0M795.0 283.2L783.0 376.4M795.5 284.4L786.0 375.8M796.0 285.6L789.0 375.2M796.5 286.8L792.0 374.6M797.0 288.0L795.0 374.0M797.5 289.2L798.0 373.4" stroke="#3a86b4" stroke-width="0.7" fill="none" opacity="0.7"/><polygon points="1008.2,285.6 1012.6,286.2 1019.4,305 1027.6,326 1036,346 1045.6,364.4 1021,364.6 1005,315.6 1006.4,295" fill="#41607d"/><path d="M1015.0 286.8l-3.4 3.4l5.2 2.6zM1017.0 291.6l-3.4 3.4l5.2 2.6zM1019.0 296.4l-3.4 3.4l5.2 2.6zM1021.0 301.2l-3.4 3.4l5.2 2.6zM1023.1 306.0l-3.4 3.4l5.2 2.6zM1025.1 310.8l-3.4 3.4l5.2 2.6zM1027.1 315.6l-3.4 3.4l5.2 2.6zM1029.1 320.4l-3.4 3.4l5.2 2.6zM1031.1 325.2l-3.4 3.4l5.2 2.6zM1033.1 330.0l-3.4 3.4l5.2 2.6zM1035.1 334.8l-3.4 3.4l5.2 2.6zM1037.1 339.6l-3.4 3.4l5.2 2.6zM1039.2 344.4l-3.4 3.4l5.2 2.6zM1041.2 349.2l-3.4 3.4l5.2 2.6zM1043.2 354.0l-3.4 3.4l5.2 2.6z" fill="#42a7de"/><path d="M912.8 371V448.5" stroke="#357fae" stroke-width="0.8" opacity="0.85"/><path d="M748 431L912 422.6L1078.7 413.7" stroke="#3a8fc2" stroke-width="0.7" fill="none" opacity="0.7"/></g><ellipse cx="1428" cy="148.4" rx="21.6" ry="11.6" fill="none" stroke="#8fa9c8" stroke-opacity="0.55" stroke-width="6.8"/><polygon points="1417,123 1437.6,122.4 1438.4,134.8 1417.6,135.2" fill="#8297b3"/><polygon points="1418,135.8 1438.4,135.4 1438.8,150.6 1418.6,151.2" fill="#97a9c3"/><path d="M1417.5 135.4H1438.5" stroke="#3a506c" stroke-width="0.9"/></svg>
<span class="t sans" style="left:1423px;top:138px;font-size:10px;color:#50627c;line-height:10px">后</span>
<span class="t sans" style="left:1422px;top:124.5px;font-size:9px;color:#6b7e98;line-height:9px;transform:scaleY(0.8)">顶</span>
<div class="abs" style="left:1114px;top:615px;width:16px;height:1px;background:#b4b4b4"></div>
<div class="abs" style="left:348.5px;top:527px;width:1px;height:16px;background:#b4b4b4"></div>
<div class="abs" style="left:1468.5px;top:332px;width:1px;height:16px;background:#b4b4b4"></div>
<div class="abs" style="left:1465px;top:102px;width:2px;height:510px;background:#f8f8f8"></div>
<!--VIEW-E-->

<!-- ===== RIGHT PANEL ===== -->
<!--RIGHT-S-->
<div class="hline" style="left:1471px;top:69px;width:419px;background:#d2d2d2"></div>
<div class="vline" style="left:1471px;top:69px;height:512px;background:#d0d0d0"></div>
<div class="hline" style="left:1471px;top:100px;width:419px;background:#c9c9c9"></div>
<svg style="left:1481px;top:77px" width="16" height="16" viewBox="0 0 16 16"><circle cx="8" cy="7.8" r="6.4" fill="none" stroke="#2b2b2b" stroke-width="1.3"/><path d="M8.6 6.4L7.4 11.2" stroke="#2b2b2b" stroke-width="1.7"/><path d="M6.9 6.5H8.7M6.6 11.2H8.6" stroke="#2b2b2b" stroke-width="0.9"/><circle cx="9" cy="4.2" r="1" fill="#2b2b2b"/></svg>
<span class="t song" style="left:1503.5px;top:70px;height:30px;line-height:30px;font-size:18.67px;color:#1c1c1c">焊缝属性</span>
<div class="hline" style="left:1561px;top:580px;width:329px;background:#c9c9c9"></div>
<div class="abs" style="left:1472px;top:580px;width:89.5px;height:30px;background:#fff"></div>
<span class="t song" style="left:1478.6px;top:581px;height:30px;line-height:32px;font-size:18.67px;color:#1c1c1c">焊缝属性</span>
<div class="abs" style="left:1561.5px;top:580px;width:51.0px;height:30px;background:#f0f0f0;border:1px solid #c9c9c9;border-bottom:none;box-sizing:border-box"></div>
<span class="t song" style="left:1568.4px;top:581px;height:30px;line-height:32px;font-size:18.67px;color:#1c1c1c">操作</span>
<div class="abs" style="left:1471px;top:610px;width:142.5px;height:2.6px;background:#a2a2a2"></div>
<!--RIGHT-E-->

<!-- ===== BOTTOM PANEL ===== -->
<!--BOTTOM-S-->
<div class="vline" style="left:351px;top:618px;height:353px;background:#d6d6d6"></div>
<div class="hline" style="left:352px;top:649px;width:1538px;background:#c9c9c9"></div>
<div class="hline" style="left:352px;top:970px;width:1538px;background:#c9c9c9"></div>
<svg style="left:360px;top:624px" width="19" height="19" viewBox="360 624 19 19"><path d="M375.5 627.2V640" stroke="#6a6a6a" stroke-width="2.8" stroke-linecap="round"/><path d="M364 627.6H369.4L371 631.2H374.4M366.2 632.9H374.4M362.8 639.2H369.6L371 635.8H374.4" fill="none" stroke="#8a8a8a" stroke-width="1.1"/><circle cx="363.8" cy="627.6" r="1.2" fill="#6e6e6e"/><circle cx="366" cy="632.9" r="1.8" fill="#7a7a7a"/><circle cx="367.3" cy="636.9" r="1.1" fill="#7a7a7a"/><circle cx="362.8" cy="639" r="2.1" fill="#7a7a7a"/></svg>
<span class="t song" style="left:383.5px;top:618.5px;height:30px;line-height:30px;font-size:18.67px;color:#1c1c1c">工艺推理</span>
<div class="abs" style="left:365.5px;top:688.5px;width:16px;height:16px;background:#fff;border:1px solid #9a9a9a;box-sizing:border-box"></div>
<svg style="left:367.5px;top:690.5px" width="12" height="12" viewBox="0 0 12 12"><path d="M1.4 6.2L4.6 9.8L10.4 1.6" fill="none" stroke="#111" stroke-width="2.2"/></svg>
<span class="t song" style="left:388.5px;top:686.7px;height:20px;line-height:20px;font-size:14.67px;color:#111">全选</span>
<div class="abs" style="left:450px;top:663px;width:1.6px;height:68px;background:#a6a6a6"></div>
<span class="t song" style="left:476.8px;top:668.3px;height:20px;line-height:20px;font-size:14.67px;color:#111">焊缝编号</span>
<div class="abs" style="left:552px;top:664.5px;width:100px;height:27.8px;background:#fff;border:1px solid #ababab;box-sizing:border-box"></div>
<span class="t song" style="left:658.2px;top:668.3px;height:20px;line-height:20px;font-size:14.67px;color:#111">所属组立</span>
<div class="abs" style="left:733.4px;top:664.5px;width:100px;height:27.8px;background:#fff;border:1px solid #ababab;box-sizing:border-box"></div>
<span class="t song" style="left:839.6px;top:668.3px;height:20px;line-height:20px;font-size:14.67px;color:#111">母材类型</span>
<div class="abs" style="left:914.8px;top:664.5px;width:100px;height:27.8px;background:#fff;border:1px solid #ababab;box-sizing:border-box"></div>
<span class="t song" style="left:1021px;top:668.3px;height:20px;line-height:20px;font-size:14.67px;color:#111">母材材料</span>
<div class="abs" style="left:1096.2px;top:664.5px;width:100px;height:27.8px;background:#e6e6e6;border:1px solid #adadad;box-sizing:border-box"></div>
<span class="t sans" style="left:1102.7px;top:664.5px;height:27.8px;line-height:28.8px;font-size:14.67px;color:#111;letter-spacing:0.1px">------</span>
<svg style="left:1177.2px;top:674.4px" width="14" height="9" viewBox="0 0 14 9"><path d="M1 1.2L7 7.2L13 1.2" fill="none" stroke="#3a3a3a" stroke-width="1.6"/></svg>
<span class="t song" style="left:1202.4px;top:668.3px;height:20px;line-height:20px;font-size:14.67px;color:#111">母材厚度</span>
<div class="abs" style="left:1277.6px;top:664.5px;width:100px;height:27.8px;background:#fff;border:1px solid #ababab;box-sizing:border-box"></div>
<span class="t song" style="left:1383.8px;top:668.3px;height:20px;line-height:20px;font-size:14.67px;color:#111">焊接方法</span>
<div class="abs" style="left:1459px;top:664.5px;width:100px;height:27.8px;background:#e6e6e6;border:1px solid #adadad;box-sizing:border-box"></div>
<span class="t sans" style="left:1465.5px;top:664.5px;height:27.8px;line-height:28.8px;font-size:14.67px;color:#111;letter-spacing:0.1px">------</span>
<svg style="left:1540px;top:674.4px" width="14" height="9" viewBox="0 0 14 9"><path d="M1 1.2L7 7.2L13 1.2" fill="none" stroke="#3a3a3a" stroke-width="1.6"/></svg>
<span class="t song" style="left:476.8px;top:704.3px;height:20px;line-height:20px;font-size:14.67px;color:#111">焊缝类型</span>
<div class="abs" style="left:552px;top:700.4px;width:100px;height:28px;background:#e6e6e6;border:1px solid #adadad;box-sizing:border-box"></div>
<span class="t sans" style="left:558.5px;top:700.4px;height:28px;line-height:29px;font-size:14.67px;color:#111;letter-spacing:0.1px">------</span>
<svg style="left:633px;top:710.4px" width="14" height="9" viewBox="0 0 14 9"><path d="M1 1.2L7 7.2L13 1.2" fill="none" stroke="#3a3a3a" stroke-width="1.6"/></svg>
<span class="t song" style="left:658.2px;top:704.3px;height:20px;line-height:20px;font-size:14.67px;color:#111">焊接位置</span>
<div class="abs" style="left:733.4px;top:700.4px;width:100px;height:28px;background:#e6e6e6;border:1px solid #adadad;box-sizing:border-box"></div>
<span class="t sans" style="left:739.9px;top:700.4px;height:28px;line-height:29px;font-size:14.67px;color:#111;letter-spacing:0.1px">------</span>
<svg style="left:814.4px;top:710.4px" width="14" height="9" viewBox="0 0 14 9"><path d="M1 1.2L7 7.2L13 1.2" fill="none" stroke="#3a3a3a" stroke-width="1.6"/></svg>
<span class="t song" style="left:839.6px;top:704.3px;height:20px;line-height:20px;font-size:14.67px;color:#111">坡口类型</span>
<div class="abs" style="left:914.8px;top:700.4px;width:100px;height:28px;background:#e6e6e6;border:1px solid #adadad;box-sizing:border-box"></div>
<span class="t sans" style="left:921.3px;top:700.4px;height:28px;line-height:29px;font-size:14.67px;color:#111;letter-spacing:0.1px">------</span>
<svg style="left:995.8px;top:710.4px" width="14" height="9" viewBox="0 0 14 9"><path d="M1 1.2L7 7.2L13 1.2" fill="none" stroke="#3a3a3a" stroke-width="1.6"/></svg>
<span class="t song" style="left:1021px;top:704.3px;height:20px;line-height:20px;font-size:14.67px;color:#111">焊接材料</span>
<div class="abs" style="left:1096.2px;top:700.4px;width:100px;height:28px;background:#e6e6e6;border:1px solid #adadad;box-sizing:border-box"></div>
<span class="t sans" style="left:1102.7px;top:700.4px;height:28px;line-height:29px;font-size:14.67px;color:#111;letter-spacing:0.1px">------</span>
<svg style="left:1177.2px;top:710.4px" width="14" height="9" viewBox="0 0 14 9"><path d="M1 1.2L7 7.2L13 1.2" fill="none" stroke="#3a3a3a" stroke-width="1.6"/></svg>
<span class="t song" style="left:1202.4px;top:704.3px;height:20px;line-height:20px;font-size:14.67px;color:#111">焊接设备</span>
<div class="abs" style="left:1277.6px;top:700.4px;width:100px;height:28px;background:#e6e6e6;border:1px solid #adadad;box-sizing:border-box"></div>
<span class="t sans" style="left:1284.1px;top:700.4px;height:28px;line-height:29px;font-size:14.67px;color:#111;letter-spacing:0.1px">------</span>
<svg style="left:1358.6px;top:710.4px" width="14" height="9" viewBox="0 0 14 9"><path d="M1 1.2L7 7.2L13 1.2" fill="none" stroke="#3a3a3a" stroke-width="1.6"/></svg>
<div class="abs song" style="left:1565px;top:663.5px;width:74.5px;height:29.899999999999977px;background:#efefef;border:1px solid #adadad;box-sizing:border-box;text-align:center;line-height:28.899999999999977px;font-size:14.67px;color:#111;white-space:nowrap">查询</div>
<div class="abs song" style="left:1646px;top:663.5px;width:74.59999999999991px;height:29.899999999999977px;background:#efefef;border:1px solid #adadad;box-sizing:border-box;text-align:center;line-height:28.899999999999977px;font-size:14.67px;color:#111;white-space:nowrap">清空</div>
<div class="abs song" style="left:1755px;top:663.5px;width:124.59999999999991px;height:29.899999999999977px;background:#efefef;border:1px solid #adadad;box-sizing:border-box;text-align:center;line-height:28.899999999999977px;font-size:14.67px;color:#111;white-space:nowrap">过滤选中对象</div>
<div class="abs song" style="left:1755px;top:700.6px;width:124.59999999999991px;height:30.0px;background:#efefef;border:1px solid #adadad;box-sizing:border-box;text-align:center;line-height:29.0px;font-size:14.67px;color:#111;white-space:nowrap">一键推理</div>
<div class="hline" style="left:359px;top:745.4px;width:1526px;background:#a9a9a9"></div>
<div class="abs" style="left:359.5px;top:754px;width:1525.5px;height:206.5px;overflow:hidden;border-top:1px solid #c4c4c4;box-sizing:border-box">
<div class="abs" style="left:0;top:0;width:1505.5px;height:185.29999999999995px;overflow:hidden">
<div class="abs" style="left:0.0px;top:21.0px;width:1505.5px;height:1.0px;background:#c2c2c2"></div>
<div class="abs" style="left:42.5px;top:0.0px;width:1.0px;height:186.0px;background:#d0d0d0"></div>
<div class="abs" style="left:167.5px;top:0.0px;width:1.0px;height:186.0px;background:#d0d0d0"></div>
<div class="abs" style="left:292.5px;top:0.0px;width:1.0px;height:186.0px;background:#d0d0d0"></div>
<div class="abs" style="left:417.5px;top:0.0px;width:1.0px;height:186.0px;background:#d0d0d0"></div>
<div class="abs" style="left:542.5px;top:0.0px;width:1.0px;height:186.0px;background:#d0d0d0"></div>
<div class="abs" style="left:667.5px;top:0.0px;width:1.0px;height:186.0px;background:#d0d0d0"></div>
<div class="abs" style="left:792.5px;top:0.0px;width:1.0px;height:186.0px;background:#d0d0d0"></div>
<div class="abs" style="left:917.5px;top:0.0px;width:1.0px;height:186.0px;background:#d0d0d0"></div>
<div class="abs" style="left:1042.5px;top:0.0px;width:1.0px;height:186.0px;background:#d0d0d0"></div>
<div class="abs" style="left:1167.5px;top:0.0px;width:1.0px;height:186.0px;background:#d0d0d0"></div>
<div class="abs" style="left:1292.5px;top:0.0px;width:1.0px;height:186.0px;background:#d0d0d0"></div>
<div class="abs" style="left:1417.5px;top:0.0px;width:1.0px;height:186.0px;background:#d0d0d0"></div>
<div class="abs" style="left:42.5px;top:58.5px;width:1463.0px;height:1.0px;background:#d0d0d0"></div>
<div class="abs" style="left:42.5px;top:96.0px;width:1463.0px;height:1.0px;background:#d0d0d0"></div>
<div class="abs" style="left:42.5px;top:133.5px;width:1463.0px;height:1.0px;background:#d0d0d0"></div>
<div class="abs" style="left:42.5px;top:171.0px;width:1463.0px;height:1.0px;background:#d0d0d0"></div>
<div class="abs" style="left:42.5px;top:208.5px;width:1463.0px;height:1.0px;background:#d0d0d0"></div>
<span class="t sans" style="left:44.5px;top:2px;width:125px;height:20px;line-height:20px;text-align:center;font-size:15px;font-weight:bold;color:#111">母材1厚度</span>
<span class="t sans" style="left:169.5px;top:2px;width:125px;height:20px;line-height:20px;text-align:center;font-size:15px;font-weight:bold;color:#111">母材2类型</span>
<span class="t sans" style="left:294.5px;top:2px;width:125px;height:20px;line-height:20px;text-align:center;font-size:15px;font-weight:bold;color:#111">母材2材料</span>
<span class="t sans" style="left:419.5px;top:2px;width:125px;height:20px;line-height:20px;text-align:center;font-size:15px;font-weight:bold;color:#111">母材2厚度</span>
<span class="t sans" style="left:544.5px;top:2px;width:125px;height:20px;line-height:20px;text-align:center;font-size:15px;font-weight:bold;color:#111">焊接类型</span>
<span class="t sans" style="left:669.5px;top:2px;width:125px;height:20px;line-height:20px;text-align:center;font-size:15px;font-weight:bold;color:#111">焊接位置</span>
<span class="t sans" style="left:794.5px;top:2px;width:125px;height:20px;line-height:20px;text-align:center;font-size:15px;font-weight:bold;color:#111">焊接方法</span>
<span class="t sans" style="left:919.5px;top:2px;width:125px;height:20px;line-height:20px;text-align:center;font-size:15px;font-weight:bold;color:#111">坡口类型</span>
<span class="t sans" style="left:1044.5px;top:2px;width:125px;height:20px;line-height:20px;text-align:center;font-size:15px;font-weight:bold;color:#111">焊接材料</span>
<span class="t sans" style="left:1169.5px;top:2px;width:125px;height:20px;line-height:20px;text-align:center;font-size:15px;font-weight:bold;color:#111">焊丝直径</span>
<span class="t sans" style="left:1294.5px;top:2px;width:125px;height:20px;line-height:20px;text-align:center;font-size:15px;font-weight:bold;color:#111">焊接设备</span>
<span class="t sans" style="left:1419.5px;top:2px;width:125px;height:20px;line-height:20px;text-align:center;font-size:15px;font-weight:bold;color:#111">焊脚高度</span>
<div class="abs" style="left:0.0px;top:57.7px;width:38.0px;height:1.6px;background:#a4a4a4"></div>
<div class="abs" style="left:37.1px;top:23.0px;width:1.2px;height:36.5px;background:#8c8c8c"></div>
<div class="abs" style="left:39.9px;top:23.0px;width:1.0px;height:36.5px;background:#dedede"></div>
<span class="t sans" style="left:3.1px;top:31.4px;height:20px;line-height:20px;font-size:15px;font-weight:bold;color:#111">1</span>
<span class="t sans" style="left:48.6px;top:29.8px;height:20px;line-height:20px;font-size:14.67px;color:#111">15</span>
<span class="t sans" style="left:173.6px;top:29.8px;height:20px;line-height:20px;font-size:14.67px;color:#111">STIFFENER</span>
<span class="t sans" style="left:298.6px;top:29.8px;height:20px;line-height:20px;font-size:14.67px;color:#111">A</span>
<span class="t sans" style="left:423.6px;top:29.8px;height:20px;line-height:20px;font-size:14.67px;color:#111">12</span>
<span class="t sans" style="left:548.6px;top:29.8px;height:20px;line-height:20px;font-size:14.67px;color:#111">fillet</span>
<span class="t sans" style="left:673.6px;top:29.8px;height:20px;line-height:20px;font-size:14.67px;color:#111">平焊</span>
<span class="t sans" style="left:797.6px;top:22.5px;height:17px;line-height:17px;font-size:14.9px;color:#111">二氧化碳气体保</span>
<span class="t sans" style="left:797.6px;top:39.5px;height:17px;line-height:17px;font-size:14.9px;color:#111">护焊</span>
<span class="t sans" style="left:923.6px;top:29.8px;height:20px;line-height:20px;font-size:14.67px;color:#111">Y</span>
<span class="t sans" style="left:1048.6px;top:29.8px;height:20px;line-height:20px;font-size:14.67px;color:#111">焊丝</span>
<span class="t sans" style="left:1173.6px;top:29.8px;height:20px;line-height:20px;font-size:14.67px;color:#111">1.6</span>
<span class="t sans" style="left:1298.6px;top:29.8px;height:20px;line-height:20px;font-size:14.67px;color:#111">FCAW-1</span>
<span class="t sans" style="left:1423.6px;top:29.8px;height:20px;line-height:20px;font-size:14.67px;color:#111">0</span>
<div class="abs" style="left:0.0px;top:95.2px;width:38.0px;height:1.6px;background:#a4a4a4"></div>
<div class="abs" style="left:37.1px;top:60.5px;width:1.2px;height:36.5px;background:#8c8c8c"></div>
<div class="abs" style="left:39.9px;top:60.5px;width:1.0px;height:36.5px;background:#dedede"></div>
<span class="t sans" style="left:3.1px;top:68.9px;height:20px;line-height:20px;font-size:15px;font-weight:bold;color:#111">2</span>
<span class="t sans" style="left:48.6px;top:67.2px;height:20px;line-height:20px;font-size:14.67px;color:#111">15</span>
<span class="t sans" style="left:173.6px;top:67.2px;height:20px;line-height:20px;font-size:14.67px;color:#111">STIFFENER</span>
<span class="t sans" style="left:298.6px;top:67.2px;height:20px;line-height:20px;font-size:14.67px;color:#111">A</span>
<span class="t sans" style="left:423.6px;top:67.2px;height:20px;line-height:20px;font-size:14.67px;color:#111">12</span>
<span class="t sans" style="left:548.6px;top:67.2px;height:20px;line-height:20px;font-size:14.67px;color:#111">fillet</span>
<span class="t sans" style="left:673.6px;top:67.2px;height:20px;line-height:20px;font-size:14.67px;color:#111">平焊</span>
<span class="t sans" style="left:797.6px;top:60.0px;height:17px;line-height:17px;font-size:14.9px;color:#111">二氧化碳气体保</span>
<span class="t sans" style="left:797.6px;top:77.0px;height:17px;line-height:17px;font-size:14.9px;color:#111">护焊</span>
<span class="t sans" style="left:923.6px;top:67.2px;height:20px;line-height:20px;font-size:14.67px;color:#111">Y</span>
<span class="t sans" style="left:1048.6px;top:67.2px;height:20px;line-height:20px;font-size:14.67px;color:#111">焊丝</span>
<span class="t sans" style="left:1173.6px;top:67.2px;height:20px;line-height:20px;font-size:14.67px;color:#111">1.6</span>
<span class="t sans" style="left:1298.6px;top:67.2px;height:20px;line-height:20px;font-size:14.67px;color:#111">FCAW-1</span>
<span class="t sans" style="left:1423.6px;top:67.2px;height:20px;line-height:20px;font-size:14.67px;color:#111">0</span>
<div class="abs" style="left:0.0px;top:132.7px;width:38.0px;height:1.6px;background:#a4a4a4"></div>
<div class="abs" style="left:37.1px;top:98.0px;width:1.2px;height:36.5px;background:#8c8c8c"></div>
<div class="abs" style="left:39.9px;top:98.0px;width:1.0px;height:36.5px;background:#dedede"></div>
<span class="t sans" style="left:3.1px;top:106.4px;height:20px;line-height:20px;font-size:15px;font-weight:bold;color:#111">3</span>
<span class="t sans" style="left:48.6px;top:104.8px;height:20px;line-height:20px;font-size:14.67px;color:#111">15</span>
<span class="t sans" style="left:173.6px;top:104.8px;height:20px;line-height:20px;font-size:14.67px;color:#111">STIFFENER</span>
<span class="t sans" style="left:298.6px;top:104.8px;height:20px;line-height:20px;font-size:14.67px;color:#111">A</span>
<span class="t sans" style="left:423.6px;top:104.8px;height:20px;line-height:20px;font-size:14.67px;color:#111">12</span>
<span class="t sans" style="left:548.6px;top:104.8px;height:20px;line-height:20px;font-size:14.67px;color:#111">fillet</span>
<span class="t sans" style="left:673.6px;top:104.8px;height:20px;line-height:20px;font-size:14.67px;color:#111">平焊</span>
<span class="t sans" style="left:797.6px;top:97.5px;height:17px;line-height:17px;font-size:14.9px;color:#111">二氧化碳气体保</span>
<span class="t sans" style="left:797.6px;top:114.5px;height:17px;line-height:17px;font-size:14.9px;color:#111">护焊</span>
<span class="t sans" style="left:923.6px;top:104.8px;height:20px;line-height:20px;font-size:14.67px;color:#111">Y</span>
<span class="t sans" style="left:1048.6px;top:104.8px;height:20px;line-height:20px;font-size:14.67px;color:#111">焊丝</span>
<span class="t sans" style="left:1173.6px;top:104.8px;height:20px;line-height:20px;font-size:14.67px;color:#111">1.6</span>
<span class="t sans" style="left:1298.6px;top:104.8px;height:20px;line-height:20px;font-size:14.67px;color:#111">FCAW-1</span>
<span class="t sans" style="left:1423.6px;top:104.8px;height:20px;line-height:20px;font-size:14.67px;color:#111">0</span>
<div class="abs" style="left:0.0px;top:170.2px;width:38.0px;height:1.6px;background:#a4a4a4"></div>
<div class="abs" style="left:37.1px;top:135.5px;width:1.2px;height:36.5px;background:#8c8c8c"></div>
<div class="abs" style="left:39.9px;top:135.5px;width:1.0px;height:36.5px;background:#dedede"></div>
<span class="t sans" style="left:3.1px;top:143.9px;height:20px;line-height:20px;font-size:15px;font-weight:bold;color:#111">4</span>
<span class="t sans" style="left:48.6px;top:142.2px;height:20px;line-height:20px;font-size:14.67px;color:#111">15</span>
<span class="t sans" style="left:173.6px;top:142.2px;height:20px;line-height:20px;font-size:14.67px;color:#111">STIFFENER</span>
<span class="t sans" style="left:298.6px;top:142.2px;height:20px;line-height:20px;font-size:14.67px;color:#111">A</span>
<span class="t sans" style="left:423.6px;top:142.2px;height:20px;line-height:20px;font-size:14.67px;color:#111">12</span>
<span class="t sans" style="left:548.6px;top:142.2px;height:20px;line-height:20px;font-size:14.67px;color:#111">fillet</span>
<span class="t sans" style="left:673.6px;top:142.2px;height:20px;line-height:20px;font-size:14.67px;color:#111">平焊</span>
<span class="t sans" style="left:797.6px;top:135.0px;height:17px;line-height:17px;font-size:14.9px;color:#111">二氧化碳气体保</span>
<span class="t sans" style="left:797.6px;top:152.0px;height:17px;line-height:17px;font-size:14.9px;color:#111">护焊</span>
<span class="t sans" style="left:923.6px;top:142.2px;height:20px;line-height:20px;font-size:14.67px;color:#111">Y</span>
<span class="t sans" style="left:1048.6px;top:142.2px;height:20px;line-height:20px;font-size:14.67px;color:#111">焊丝</span>
<span class="t sans" style="left:1173.6px;top:142.2px;height:20px;line-height:20px;font-size:14.67px;color:#111">1.6</span>
<span class="t sans" style="left:1298.6px;top:142.2px;height:20px;line-height:20px;font-size:14.67px;color:#111">FCAW-1</span>
<span class="t sans" style="left:1423.6px;top:142.2px;height:20px;line-height:20px;font-size:14.67px;color:#111">0</span>
<div class="abs" style="left:0.0px;top:207.7px;width:38.0px;height:1.6px;background:#a4a4a4"></div>
<div class="abs" style="left:37.1px;top:173.0px;width:1.2px;height:36.5px;background:#8c8c8c"></div>
<div class="abs" style="left:39.9px;top:173.0px;width:1.0px;height:36.5px;background:#dedede"></div>
<span class="t sans" style="left:3.1px;top:181.4px;height:20px;line-height:20px;font-size:15px;font-weight:bold;color:#111">5</span>
<span class="t sans" style="left:48.6px;top:179.8px;height:20px;line-height:20px;font-size:14.67px;color:#111">15</span>
<span class="t sans" style="left:173.6px;top:179.8px;height:20px;line-height:20px;font-size:14.67px;color:#111">STIFFENER</span>
<span class="t sans" style="left:298.6px;top:179.8px;height:20px;line-height:20px;font-size:14.67px;color:#111">A</span>
<span class="t sans" style="left:423.6px;top:179.8px;height:20px;line-height:20px;font-size:14.67px;color:#111">12</span>
<span class="t sans" style="left:548.6px;top:179.8px;height:20px;line-height:20px;font-size:14.67px;color:#111">fillet</span>
<span class="t sans" style="left:673.6px;top:179.8px;height:20px;line-height:20px;font-size:14.67px;color:#111">平焊</span>
<span class="t sans" style="left:797.6px;top:172.5px;height:17px;line-height:17px;font-size:14.9px;color:#111">二氧化碳气体保</span>
<span class="t sans" style="left:797.6px;top:189.5px;height:17px;line-height:17px;font-size:14.9px;color:#111">护焊</span>
<span class="t sans" style="left:923.6px;top:179.8px;height:20px;line-height:20px;font-size:14.67px;color:#111">Y</span>
<span class="t sans" style="left:1048.6px;top:179.8px;height:20px;line-height:20px;font-size:14.67px;color:#111">焊丝</span>
<span class="t sans" style="left:1173.6px;top:179.8px;height:20px;line-height:20px;font-size:14.67px;color:#111">1.6</span>
<span class="t sans" style="left:1298.6px;top:179.8px;height:20px;line-height:20px;font-size:14.67px;color:#111">FCAW-1</span>
<span class="t sans" style="left:1423.6px;top:179.8px;height:20px;line-height:20px;font-size:14.67px;color:#111">0</span>
</div>
<div class="abs" style="left:1505.5px;top:1.0px;width:20.0px;height:185.0px;background:#fff"></div>
<svg style="left:1509.5px;top:6px" width="12" height="8" viewBox="0 0 12 8"><path d="M0.8 6.8L6 1.4L11.2 6.8" fill="none" stroke="#3c3c3c" stroke-width="1.9"/></svg>
<svg style="left:1509.5px;top:172.5px" width="12" height="8" viewBox="0 0 12 8"><path d="M0.8 1.2L6 6.6L11.2 1.2" fill="none" stroke="#3c3c3c" stroke-width="1.9"/></svg>
<div class="abs" style="left:1511.3px;top:22px;width:8.4px;height:31px;border-radius:4.2px;background:#c8c8c8"></div>
<div class="abs" style="left:0.0px;top:185.3px;width:1505.5px;height:20.0px;background:#fff"></div>
<div class="abs" style="left:0.0px;top:185.3px;width:1525.5px;height:1.0px;background:#dcdcdc"></div>
<svg style="left:4.5px;top:189.20000000000005px" width="8" height="12" viewBox="0 0 8 12"><path d="M6.8 0.8L1.4 6L6.8 11.2" fill="none" stroke="#3c3c3c" stroke-width="1.9"/></svg>
<svg style="left:1491.5px;top:189.20000000000005px" width="8" height="12" viewBox="0 0 8 12"><path d="M1.2 0.8L6.6 6L1.2 11.2" fill="none" stroke="#3c3c3c" stroke-width="1.9"/></svg>
<div class="abs" style="left:508.5px;top:190.89999999999998px;width:895px;height:9px;border-radius:4.5px;background:#c8c8c8"></div>
<div class="abs" style="left:1505.5px;top:187.0px;width:20.0px;height:19.0px;background:#f0f0f0"></div>
</div>
<div class="hline" style="left:359.5px;top:960px;width:1525.5px;background:#c9c9c9"></div>
<div class="vline" style="left:1884.5px;top:754px;height:207px;background:#d4d4d4"></div>
<div class="vline" style="left:1864.5px;top:940px;height:20px;background:#dcdcdc"></div>
<!--BOTTOM-E-->

<!-- ===== BOTTOM TABS + STATUS ===== -->
<!--STATUS-S-->
<div class="abs" style="left:352px;top:970px;width:89.5px;height:30px;background:#fff"></div>
<span class="t song" style="left:359.3px;top:971px;height:30px;line-height:32px;font-size:18.67px;color:#1c1c1c">工艺推理</span>
<div class="abs" style="left:441.5px;top:970px;width:71.5px;height:30px;background:#f0f0f0;border:1px solid #c9c9c9;border-bottom:none;box-sizing:border-box"></div>
<span class="t song" style="left:448.6px;top:971px;height:30px;line-height:32px;font-size:18.67px;color:#1c1c1c">控制台</span>
<div class="abs" style="left:513px;top:970px;width:52.60000000000002px;height:30px;background:#f0f0f0;border:1px solid #c9c9c9;border-bottom:none;box-sizing:border-box"></div>
<span class="t song" style="left:520.6px;top:971px;height:30px;line-height:32px;font-size:18.67px;color:#1c1c1c">问题</span>
<div class="abs" style="left:565.6px;top:970px;width:51.19999999999993px;height:30px;background:#f0f0f0;border:1px solid #c9c9c9;border-bottom:none;box-sizing:border-box"></div>
<span class="t song" style="left:572.4px;top:971px;height:30px;line-height:32px;font-size:18.67px;color:#1c1c1c">进度</span>
<div class="abs" style="left:351px;top:1000px;width:266.5px;height:3px;background:#a2a2a2"></div>
<span class="t sans" style="left:4.4px;top:1009.6px;height:20px;line-height:20px;font-size:14.8px;color:#111">自定义当前视角内容</span>
<div class="abs" style="left:1855.8px;top:1007px;width:1.4px;height:25px;background:#a8a8a8"></div>
<svg style="left:1871px;top:1011px" width="16" height="16" viewBox="0 0 16 16"><path d="M1.4 0.6V15M5 0.6V4.4M8.4 0.6V15M11.6 0.6V4.4" stroke="#1a1a1a" stroke-width="1.5"/><path d="M14 0.6V15" stroke="#1a1a1a" stroke-width="2.4"/><path d="M5 6V15M11.4 6V13" stroke="#555" stroke-width="1"/></svg>
<!--STATUS-E-->

</div></div>
</body>
</html>
